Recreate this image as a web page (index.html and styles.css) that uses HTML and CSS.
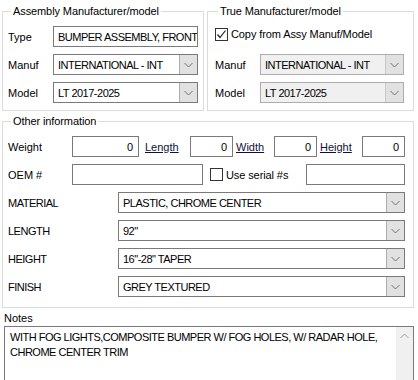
FILE: index.html
```html
<!DOCTYPE html>
<html>
<head>
<meta charset="utf-8">
<link rel="stylesheet" href="styles.css">
</head>
<body>
<div class="page">
  <div class="top">
    <fieldset class="grp grp-assy">
      <legend>Assembly Manufacturer/model</legend>
      <div class="rows">
        <div class="row">
          <span class="lbl">Type</span>
          <div class="tb w-assy"><span class="val">BUMPER ASSEMBLY, FRONT</span></div>
        </div>
        <div class="row">
          <span class="lbl">Manuf</span>
          <div class="cb w-assy"><span class="val">INTERNATIONAL - INT</span><span class="btn"><svg width="9" height="6" viewBox="0 0 9 6"><polyline points="0.5,1 4.5,5 8.5,1" fill="none" stroke="#707070" stroke-width="1"/></svg></span></div>
        </div>
        <div class="row">
          <span class="lbl">Model</span>
          <div class="cb w-assy"><span class="val">LT 2017-2025</span><span class="btn"><svg width="9" height="6" viewBox="0 0 9 6"><polyline points="0.5,1 4.5,5 8.5,1" fill="none" stroke="#707070" stroke-width="1"/></svg></span></div>
        </div>
      </div>
    </fieldset>
    <fieldset class="grp grp-true">
      <legend>True Manufacturer/model</legend>
      <div class="rows">
        <div class="row row-check">
          <span class="chk checked"><svg width="11" height="11" viewBox="0 0 11 11"><polyline points="1.5,5.5 4,8.5 9.5,1.5" fill="none" stroke="#222" stroke-width="1.2"/></svg></span>
          <span class="chk-text">Copy from Assy Manuf/Model</span>
        </div>
        <div class="row">
          <span class="lbl">Manuf</span>
          <div class="cb dis w-true"><span class="val">INTERNATIONAL - INT</span><span class="btn"><svg width="9" height="6" viewBox="0 0 9 6"><polyline points="0.5,1 4.5,5 8.5,1" fill="none" stroke="#707070" stroke-width="1"/></svg></span></div>
        </div>
        <div class="row">
          <span class="lbl">Model</span>
          <div class="cb dis w-true"><span class="val">LT 2017-2025</span><span class="btn"><svg width="9" height="6" viewBox="0 0 9 6"><polyline points="0.5,1 4.5,5 8.5,1" fill="none" stroke="#707070" stroke-width="1"/></svg></span></div>
        </div>
      </div>
    </fieldset>
  </div>

  <fieldset class="grp grp-other">
    <legend>Other information</legend>
    <div class="rows">
      <div class="row">
        <span class="lbl lbl-o">Weight</span>
        <div class="tb num w-weight"><span class="val">0</span></div>
        <span class="link l-length">Length</span>
        <div class="tb num w-dim"><span class="val">0</span></div>
        <span class="link l-width">Width</span>
        <div class="tb num w-dim"><span class="val">0</span></div>
        <span class="link l-height">Height</span>
        <div class="tb num w-dim"><span class="val">0</span></div>
      </div>
      <div class="row">
        <span class="lbl lbl-o">OEM #</span>
        <div class="tb w-oem"></div>
        <span class="chk chk-serial"></span>
        <span class="chk-text serial-text">Use serial #s</span>
        <div class="tb w-serial"></div>
      </div>
      <div class="row">
        <span class="lbl lbl-attr">MATERIAL</span>
        <div class="cb w-attr"><span class="val">PLASTIC, CHROME CENTER</span><span class="btn"><svg width="9" height="6" viewBox="0 0 9 6"><polyline points="0.5,1 4.5,5 8.5,1" fill="none" stroke="#707070" stroke-width="1"/></svg></span></div>
      </div>
      <div class="row">
        <span class="lbl lbl-attr">LENGTH</span>
        <div class="cb w-attr"><span class="val">92"</span><span class="btn"><svg width="9" height="6" viewBox="0 0 9 6"><polyline points="0.5,1 4.5,5 8.5,1" fill="none" stroke="#707070" stroke-width="1"/></svg></span></div>
      </div>
      <div class="row">
        <span class="lbl lbl-attr">HEIGHT</span>
        <div class="cb w-attr"><span class="val">16"-28" TAPER</span><span class="btn"><svg width="9" height="6" viewBox="0 0 9 6"><polyline points="0.5,1 4.5,5 8.5,1" fill="none" stroke="#707070" stroke-width="1"/></svg></span></div>
      </div>
      <div class="row">
        <span class="lbl lbl-attr">FINISH</span>
        <div class="cb w-attr"><span class="val">GREY TEXTURED</span><span class="btn"><svg width="9" height="6" viewBox="0 0 9 6"><polyline points="0.5,1 4.5,5 8.5,1" fill="none" stroke="#707070" stroke-width="1"/></svg></span></div>
      </div>
    </div>
  </fieldset>

  <div class="notes">
    <div class="notes-label">Notes</div>
    <div class="notes-box">
      <div class="notes-text">WITH FOG LIGHTS,COMPOSITE BUMPER W/ FOG HOLES, W/ RADAR HOLE,<br>CHROME CENTER TRIM</div>
      <div class="scroll"><svg width="9" height="6" viewBox="0 0 9 6"><polyline points="0.5,5 4.5,1 8.5,5" fill="none" stroke="#a0a0a0" stroke-width="1"/></svg></div>
    </div>
  </div>
</div>
</body>
</html>
```

FILE: styles.css
```css
html, body {
  margin: 0;
  padding: 0;
  background: #ffffff;
  overflow: hidden;
}
.page {
  width: 418px;
  height: 380px;
  padding: 4px 0 0 2px;
  box-sizing: border-box;
  font-family: "Liberation Sans", Arial, sans-serif;
  font-size: 11px;
  color: #000;
}
.top {
  display: flex;
  gap: 3px;
}
.grp {
  margin: 0;
  border: 1px solid #dcdcdc;
  padding: 8px 5px 7px 5px;
  box-sizing: border-box;
  min-width: 0;
}
.grp legend {
  padding: 0 2px;
  margin-left: 3px;
  line-height: 14px;
  height: 14px;
  letter-spacing: -0.1px;
}
.grp-assy { width: 202px; }
.grp-true { width: 207px; padding-left: 7px; padding-right: 9px; }
.grp-other { width: 412px; margin-top: 3px; padding: 8px 8px 10px 5px; }
.rows {
  display: flex;
  flex-direction: column;
  gap: 7px;
}
.row {
  display: flex;
  align-items: center;
  height: 21px;
}
.lbl {
  width: 45px;
  flex: none;
}
.lbl-o { width: 64px; }
.lbl-attr { width: 110px; letter-spacing: -0.5px; }
.tb, .cb {
  height: 21px;
  box-sizing: border-box;
  border: 1px solid #7a7a7a;
  background: #fff;
  display: flex;
  align-items: center;
  overflow: hidden;
  flex: none;
  white-space: nowrap;
}
.tb .val, .cb .val {
  padding-left: 4px;
  flex: 1;
  overflow: hidden;
  letter-spacing: -0.5px;
}
.num .val {
  text-align: right;
  padding-right: 5px;
  letter-spacing: 0;
}
.cb .btn {
  width: 17px;
  height: 19px;
  flex: none;
  background: #e1e1e1;
  border-left: 1px solid #adadad;
  display: flex;
  align-items: center;
  justify-content: center;
}
.cb.dis { background: #f0f0f0; border-color: #adadad; }
.cb.dis .btn { border-left-color: #c8c8c8; }
.w-assy { width: 145px; }
.w-true { width: 144px; }
.w-weight { width: 67px; }
.w-dim { width: 43px; }
.w-oem { width: 131px; }
.w-serial { width: 99px; margin-left: auto; }
.w-attr { width: 287px; }
.row-check { align-items: flex-start; padding-top: 2px; box-sizing: border-box; }
.chk {
  width: 13px;
  height: 13px;
  box-sizing: border-box;
  border: 1px solid #333;
  background: #fff;
  flex: none;
  display: flex;
  align-items: center;
  justify-content: center;
}
.chk-text { margin-left: 3px; letter-spacing: -0.1px; }
.link {
  text-decoration: underline;
  color: #10103a;
  flex: none;
}
.l-length { width: 45px; padding-left: 6px; }
.l-width { width: 38px; padding-left: 3px; }
.l-height { width: 42px; padding-left: 3px; }
.chk-serial { margin-left: 7px; }
.notes {
  margin-top: 3px;
}
.notes-label {
  line-height: 14px;
  padding-left: 2px;
}
.notes-box {
  margin: 1px 0 0 2px;
  width: 410px;
  height: 60px;
  box-sizing: border-box;
  border: 1px solid #7a7a7a;
  display: flex;
}
.notes-text {
  flex: 1;
  padding: 3px 0 0 5px;
  line-height: 15px;
  letter-spacing: -0.5px;
}
.scroll {
  width: 17px;
  background: #f0f0f0;
  display: flex;
  justify-content: center;
  padding-top: 6px;
  align-items: flex-start;
}
```
